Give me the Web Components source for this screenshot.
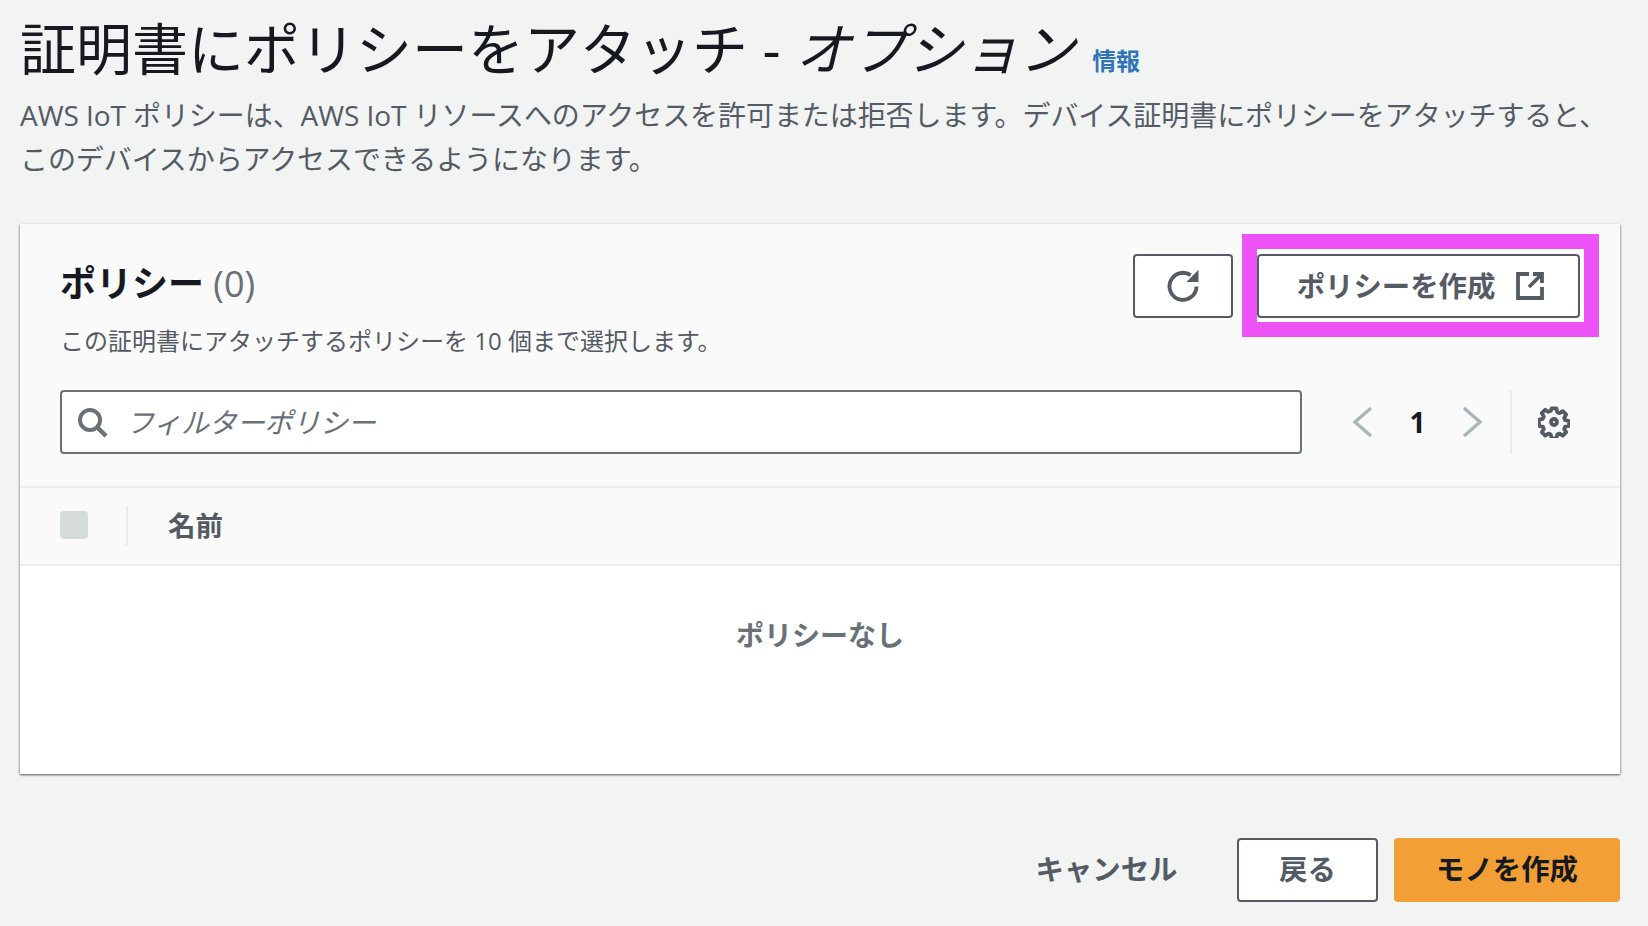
<!DOCTYPE html>
<html lang="ja"><head><meta charset="utf-8"><style>
html,body{margin:0;padding:0;background:#f2f3f3;height:926px;overflow:hidden}
body{font-family:"Open Sans","Noto Sans CJK JP",sans-serif;color:#16191f}
</style></head><body>
<iot-page></iot-page>
<script>
const def=(name,html)=>customElements.define(name,class extends HTMLElement{constructor(){super();this.attachShadow({mode:'open'}).innerHTML=html}});
const font='font-family:"Open Sans","Noto Sans CJK JP",sans-serif;';
def('aws-button',`<style>
:host{display:inline-flex;box-sizing:border-box;height:64px;align-items:center;justify-content:center;gap:19px;border:2.5px solid #545b64;border-radius:4px;background:#fff;color:#545b64;font:700 28.4px/1 "Open Sans","Noto Sans CJK JP",sans-serif}
:host([primary]){background:#f2a036;border-color:#f2a036;color:#16191f}
:host([plain]){background:none;border-color:transparent}
::slotted(svg){display:block}
</style><slot></slot>`);
def('page-header',`<style>
:host{display:block;padding:0 20px;${font}}
h1{margin:0;height:94px;box-sizing:border-box;padding-top:13px;display:flex;align-items:baseline;font-size:56px;line-height:70px;font-weight:400;color:#16191f;white-space:nowrap}
h1 i{font-style:italic}
a{font-size:24px;font-weight:700;color:#2f73b9;margin-left:17px;text-decoration:none}
p{margin:-1px 0 0;font-size:28px;line-height:44px;letter-spacing:-.07px;color:#545b64;white-space:nowrap}
b{font-weight:500}
</style><h1><span>証明書にポリシーをアタッチ - <i>オプション</i></span><a>情報</a></h1>
<p><b>AWS IoT</b> ポリシーは、<b>AWS IoT</b> リソースへのアクセスを許可または拒否します。デバイス証明書にポリシーをアタッチすると、<br>このデバイスからアクセスできるようになります。</p>`);
def('policy-filter',`<style>
:host{display:flex;flex:1;box-sizing:border-box;height:64px;align-items:center;gap:18px;padding-left:14px;background:#fff;border:2px solid #687078;border-radius:4px;color:#687078;font:italic 400 28px/1 "Open Sans","Noto Sans CJK JP",sans-serif;letter-spacing:-.2px}
svg{display:block}
</style><svg width="32" height="32" viewBox="0 0 16 16" fill="none" stroke="#687078" stroke-width="2"><circle cx="7" cy="7" r="5"/><path d="M10.6 10.6 15 15" stroke-width="2.2"/></svg><span>フィルターポリシー</span>`);
def('policy-pager',`<style>
:host{display:flex;align-items:center;height:64px;margin-left:48px;color:#16191f;font:700 28px/1 "Open Sans",sans-serif}
svg{display:block}
.n{width:87px;text-align:center}
.d{width:2px;height:64px;background:#eaeded;margin-left:25px}
.g{margin-left:26px}
</style><svg width="24" height="32" viewBox="0 0 12 16" fill="none" stroke="#aab7b8" stroke-width="1.7"><path d="M10.5 1 2.5 8l8 7"/></svg><span class="n">1</span><svg width="24" height="32" viewBox="0 0 12 16" fill="none" stroke="#aab7b8" stroke-width="1.7"><path d="M1.5 1 9.5 8l-8 7"/></svg><span class="d"></span><svg class="g" width="32" height="32" viewBox="0 0 16 16" fill="none" stroke="#545b64" stroke-width="1.9"><circle cx="8" cy="8" r="1.5"/><path stroke-linejoin="round" d="M6.8 1.2h2.4l.4 1.9 1.2.5 1.6-1 1.7 1.7-1 1.6.5 1.2 1.9.4v2.4l-1.9.4-.5 1.2 1 1.6-1.7 1.7-1.6-1-1.2.5-.4 1.9H6.8l-.4-1.9-1.2-.5-1.6 1-1.7-1.7 1-1.6-.5-1.2-1.9-.4V6.8l1.9-.4.5-1.2-1-1.6 1.7-1.7 1.6 1 1.2-.5z"/></svg>`);
def('policy-table',`<style>
:host{display:block;${font}}
.head{display:flex;align-items:center;box-sizing:border-box;height:80px;padding-left:40px;border-top:2px solid #eaeded;border-bottom:2px solid #eaeded;background:#fafafa;color:#545b64;font-size:27.5px;font-weight:700}
.cb{width:28px;height:28px;border-radius:4px;background:#d5dbdb;margin-bottom:2px}
.sep{width:2px;height:40px;background:#eaeded;margin:0 40px 0 38px}
.nm{margin-bottom:4px}
.empty{background:#fff;height:208px;box-sizing:border-box;padding-top:47px;text-align:center;color:#687078;font-size:28px;line-height:44px;font-weight:700}
</style><div class="head"><span class="cb"></span><span class="sep"></span><span class="nm">名前</span></div><div class="empty">ポリシーなし</div>`);
def('policy-card',`<style>
:host{display:block;margin:0 28px 0 20px;background:#fafafa;box-shadow:0 1px 2px rgba(0,28,36,.5),1px 1px 2px rgba(0,28,36,.15),-1px 1px 2px rgba(0,28,36,.15);${font}}
.top{display:flex;justify-content:space-between;height:166px;box-sizing:border-box;padding:10px 21px 0 40px}
.tt{padding-top:25px}
h2{margin:0;font-size:36px;line-height:50px;font-weight:700;color:#16191f}
h2 span{font-weight:500;color:#687078}
p{margin:14px 0 0;font-size:24px;line-height:36px;color:#545b64;white-space:nowrap}
p b{font-weight:500}
.acts{display:flex;align-items:flex-start;gap:9px;padding-top:20px}
.hl{border:15px solid #ec52f5;background:#fff;padding:5px 4px 4px 0;margin-top:-20px;display:flex}
.rb{width:100px;display:flex}
.bar{display:flex;padding:0 50px 32px 40px}
</style><div class="top"><div class="tt"><h2>ポリシー <span>(0)</span></h2><p>この証明書にアタッチするポリシーを <b>10</b> 個まで選択します。</p></div>
<div class="acts"><div class="rb"><aws-button style="width:100px"><svg width="36" height="36" viewBox="0 0 16 16" fill="none" stroke="#545b64" stroke-width="1.7"><path d="M14 8.2A6 6 0 1 1 11.4 3.2"/><path d="M14.9 .8v5.4H9.5z" fill="#545b64" stroke="none"/></svg></aws-button></div>
<div class="hl"><aws-button style="width:323px;padding-left:6px"><span>ポリシーを作成</span><svg width="32" height="32" viewBox="0 0 16 16" fill="none" stroke="#545b64" stroke-width="1.9"><path d="M7.5 2H2v12h12V8.5"/><path d="M9.5 2H14v4.5M14 2 7.5 8.5"/></svg></aws-button></div></div></div>
<div class="bar"><policy-filter></policy-filter><policy-pager></policy-pager></div><policy-table></policy-table>`);
def('page-footer',`<style>
:host{display:flex;justify-content:flex-end;align-items:center;gap:16px;margin:64px 28px 0 0}
aws-button{padding-bottom:2px}
</style><aws-button plain style="width:181px;margin-right:24px">キャンセル</aws-button><aws-button style="width:141px">戻る</aws-button><aws-button primary style="width:226px">モノを作成</aws-button>`);
def('iot-page',`<style>:host{display:block}page-header{margin-bottom:43px}</style><page-header></page-header><policy-card></policy-card><page-footer></page-footer>`);
</script></body></html>
